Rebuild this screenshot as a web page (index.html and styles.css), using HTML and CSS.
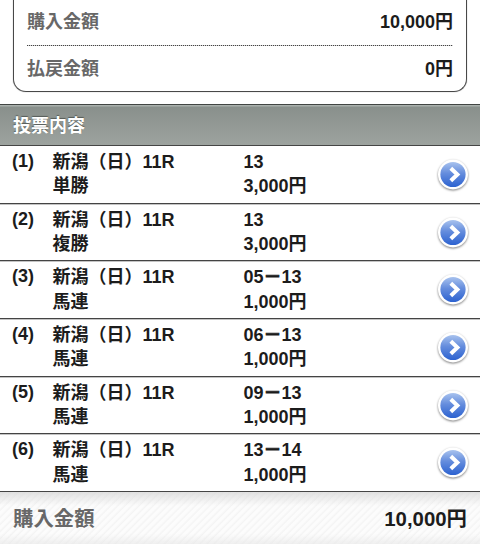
FILE: index.html
```
<!DOCTYPE html>
<html lang="ja">
<head>
<meta charset="utf-8">
<title>投票内容</title>
<link rel="stylesheet" href="styles.css">
</head>
<body>
<svg class="defs" width="0" height="0" aria-hidden="true">
  <defs>
    <linearGradient id="blue" x1="0" y1="0" x2="0" y2="1">
      <stop offset="0" stop-color="#a9c3ee"/>
      <stop offset=".45" stop-color="#658ddd"/>
      <stop offset="1" stop-color="#2c62d0"/>
    </linearGradient>
    <symbol id="go" viewBox="0 0 34 34">
      <circle cx="17" cy="16.5" r="15" fill="#fff"/>
      <circle cx="17" cy="16.5" r="12.6" fill="url(#blue)"/>
      <path d="M14.8 10.2l6.6 6.3-6.6 6.3" fill="none" stroke="#fff" stroke-width="4"/>
    </symbol>
  </defs>
</svg>
<section class="summary">
  <div class="line"><span class="label">購入金額</span><span>10,000円</span></div>
  <div class="line"><span class="label">払戻金額</span><span>0円</span></div>
</section>
<h2 class="heading">投票内容</h2>
<ol class="bets">
  <li class="bet"><span class="num">(1)</span><div>新潟（日）11R<br>単勝</div><div>13<br>3,000円</div><svg class="go"><use href="#go"/></svg></li>
  <li class="bet"><span class="num">(2)</span><div>新潟（日）11R<br>複勝</div><div>13<br>3,000円</div><svg class="go"><use href="#go"/></svg></li>
  <li class="bet"><span class="num">(3)</span><div>新潟（日）11R<br>馬連</div><div>05<span class="dash">－</span>13<br>1,000円</div><svg class="go"><use href="#go"/></svg></li>
  <li class="bet"><span class="num">(4)</span><div>新潟（日）11R<br>馬連</div><div>06<span class="dash">－</span>13<br>1,000円</div><svg class="go"><use href="#go"/></svg></li>
  <li class="bet"><span class="num">(5)</span><div>新潟（日）11R<br>馬連</div><div>09<span class="dash">－</span>13<br>1,000円</div><svg class="go"><use href="#go"/></svg></li>
  <li class="bet"><span class="num">(6)</span><div>新潟（日）11R<br>馬連</div><div>13<span class="dash">－</span>14<br>1,000円</div><svg class="go"><use href="#go"/></svg></li>
</ol>
<footer class="total"><span class="label">購入金額</span><span>10,000円</span></footer>
</body>
</html>
```
FILE: styles.css
```
* { box-sizing: border-box; }

body {
  margin: 0;
  height: 544px;
  overflow: hidden;
  display: flex;
  flex-direction: column;
  background: #fff;
  color: #1c1c1c;
  font: bold 18px/24px "Liberation Sans", "Noto Sans CJK JP", sans-serif;
}

.defs { position: absolute; }
.label { color: #686868; }

.summary {
  flex: none;
  height: 92px;
  margin: 0 13px 12px;
  padding: 0 13px;
  border: 1px solid #484848;
  border-width: 0 1px 1px;
  border-radius: 0 0 13px 13px;
  box-shadow: 0 0 1px #777;
  clip-path: inset(0 -2px -2px);
}

.line {
  display: flex;
  justify-content: space-between;
  height: 46px;
  padding-top: 10px;
}

.line:first-child {
  background: repeating-linear-gradient(90deg, #444 0 1px, #d0d0d0 1px 2px) 0 100% / 100% 1px no-repeat;
}

.line:last-child { padding-top: 11px; }

.heading {
  flex: none;
  height: 42px;
  margin: 0;
  padding: 9px 13px 0;
  border-top: 1px solid #414543;
  border-bottom: 1px solid #454545;
  background: linear-gradient(#a9b0ac 0 1px, #89908c 2px, #9da39f);
  color: #fff;
  font-size: 18px;
  line-height: 24px;
  text-shadow: 0 -1px 1px #555b58;
}

.bets {
  flex: none;
  margin: 0;
  padding: 0;
  list-style: none;
}

.bet {
  display: grid;
  grid-template-columns: 40.5px 191px 1fr 34px;
  height: 57.65px;
  padding: 4px 10px 0 12px;
  border-bottom: 1px solid #444;
  box-shadow: 0 1px 0 #c4c4c4;
  line-height: 24.4px;
}

.num { margin-top: -1px; }
.dash { -webkit-text-stroke: .8px; }

.go {
  width: 34px;
  height: 34px;
  margin-top: 8px;
  filter: drop-shadow(0 1px 1px rgba(0, 0, 0, .5));
}

.total {
  flex: 1;
  display: flex;
  justify-content: space-between;
  padding: 14px 13px 0;
  background:
    linear-gradient(rgba(215, 215, 215, .75), rgba(240, 240, 240, 0) 14px),
    linear-gradient(transparent 42px, rgba(230, 230, 230, .6)),
    repeating-linear-gradient(-45deg, #fcfcfc 0 2px, #f4f4f4 3px, #fcfcfc 5px);
  font-size: 20.4px;
  line-height: 26px;
}
```
